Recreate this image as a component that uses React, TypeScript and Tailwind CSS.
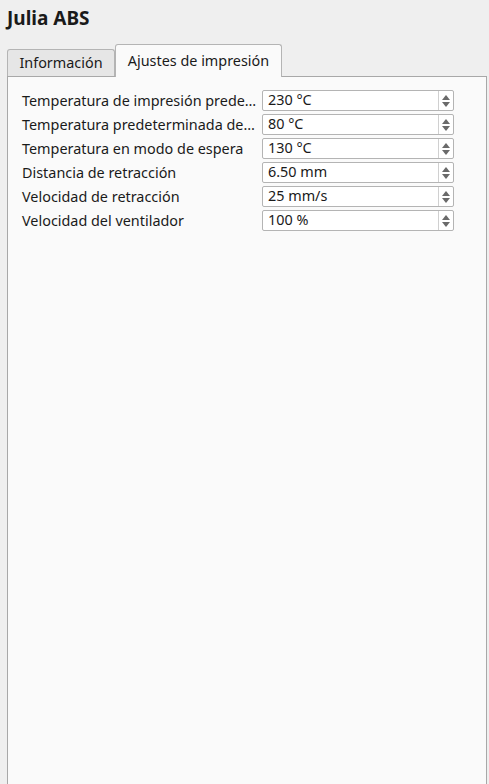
const rows = [
  { label: "Temperatura de impresión prede…", value: "230 °C" },
  { label: "Temperatura predeterminada de…", value: "80 °C" },
  { label: "Temperatura en modo de espera", value: "130 °C" },
  { label: "Distancia de retracción", value: "6.50 mm" },
  { label: "Velocidad de retracción", value: "25 mm/s" },
  { label: "Velocidad del ventilador", value: "100 %" },
];

function SpinBox({ value }: { value: string }) {
  return (
    <div className="flex h-[21px] w-[192px] items-stretch rounded-[2px] border border-[#b4b4b4] bg-white">
      <div className="flex flex-1 items-center pl-[5px] text-[14.4px] leading-none text-[#1a1a1a]">{value}</div>
      <div className="flex w-[15px] flex-col items-center justify-center gap-[2px] border-l border-[#d0d0d0]">
        <svg width="8" height="5" viewBox="0 0 8 5">
          <path d="M4 0 L8 5 L0 5 Z" fill="#6a6a6a" />
        </svg>
        <svg width="8" height="5" viewBox="0 0 8 5">
          <path d="M0 0 L8 0 L4 5 Z" fill="#6a6a6a" />
        </svg>
      </div>
    </div>
  );
}

export default function App() {
  return (
    <div
      className="h-[784px] w-[489px] overflow-hidden bg-[#efefef] text-[#1a1a1a]"
      style={{ fontFamily: '"Noto Sans", "Open Sans", sans-serif' }}
    >
      <h1 className="px-[7px] pt-[5px] text-[19px] font-bold leading-[26px]">Julia ABS</h1>

      <div className="ml-[7px] mr-[2px] mt-[13px]">
        <div className="flex items-end">
          <div className="flex h-[27px] w-[108px] items-center justify-center rounded-t-[3px] border border-b-0 border-[#b4b4b4] bg-[#e6e6e6] text-[14.4px]">
            Información
          </div>
          <div className="relative z-10 -mb-px flex h-[33px] w-[167px] items-center justify-center rounded-t-[3px] border border-b-0 border-[#b4b4b4] bg-[#fafafa] text-[14.4px]">
            Ajustes de impresión
          </div>
        </div>
        <div className="h-[720px] border border-[#a8a8a8] bg-[#fafafa] pl-[14px] pt-[13px]">
          <div className="flex flex-col gap-[3px]">
            {rows.map((r) => (
              <div key={r.label} className="flex items-center">
                <div className="w-[240px] whitespace-nowrap pr-[2px] text-[14.4px] leading-[21px]">{r.label}</div>
                <SpinBox value={r.value} />
              </div>
            ))}
          </div>
        </div>
      </div>
    </div>
  );
}
